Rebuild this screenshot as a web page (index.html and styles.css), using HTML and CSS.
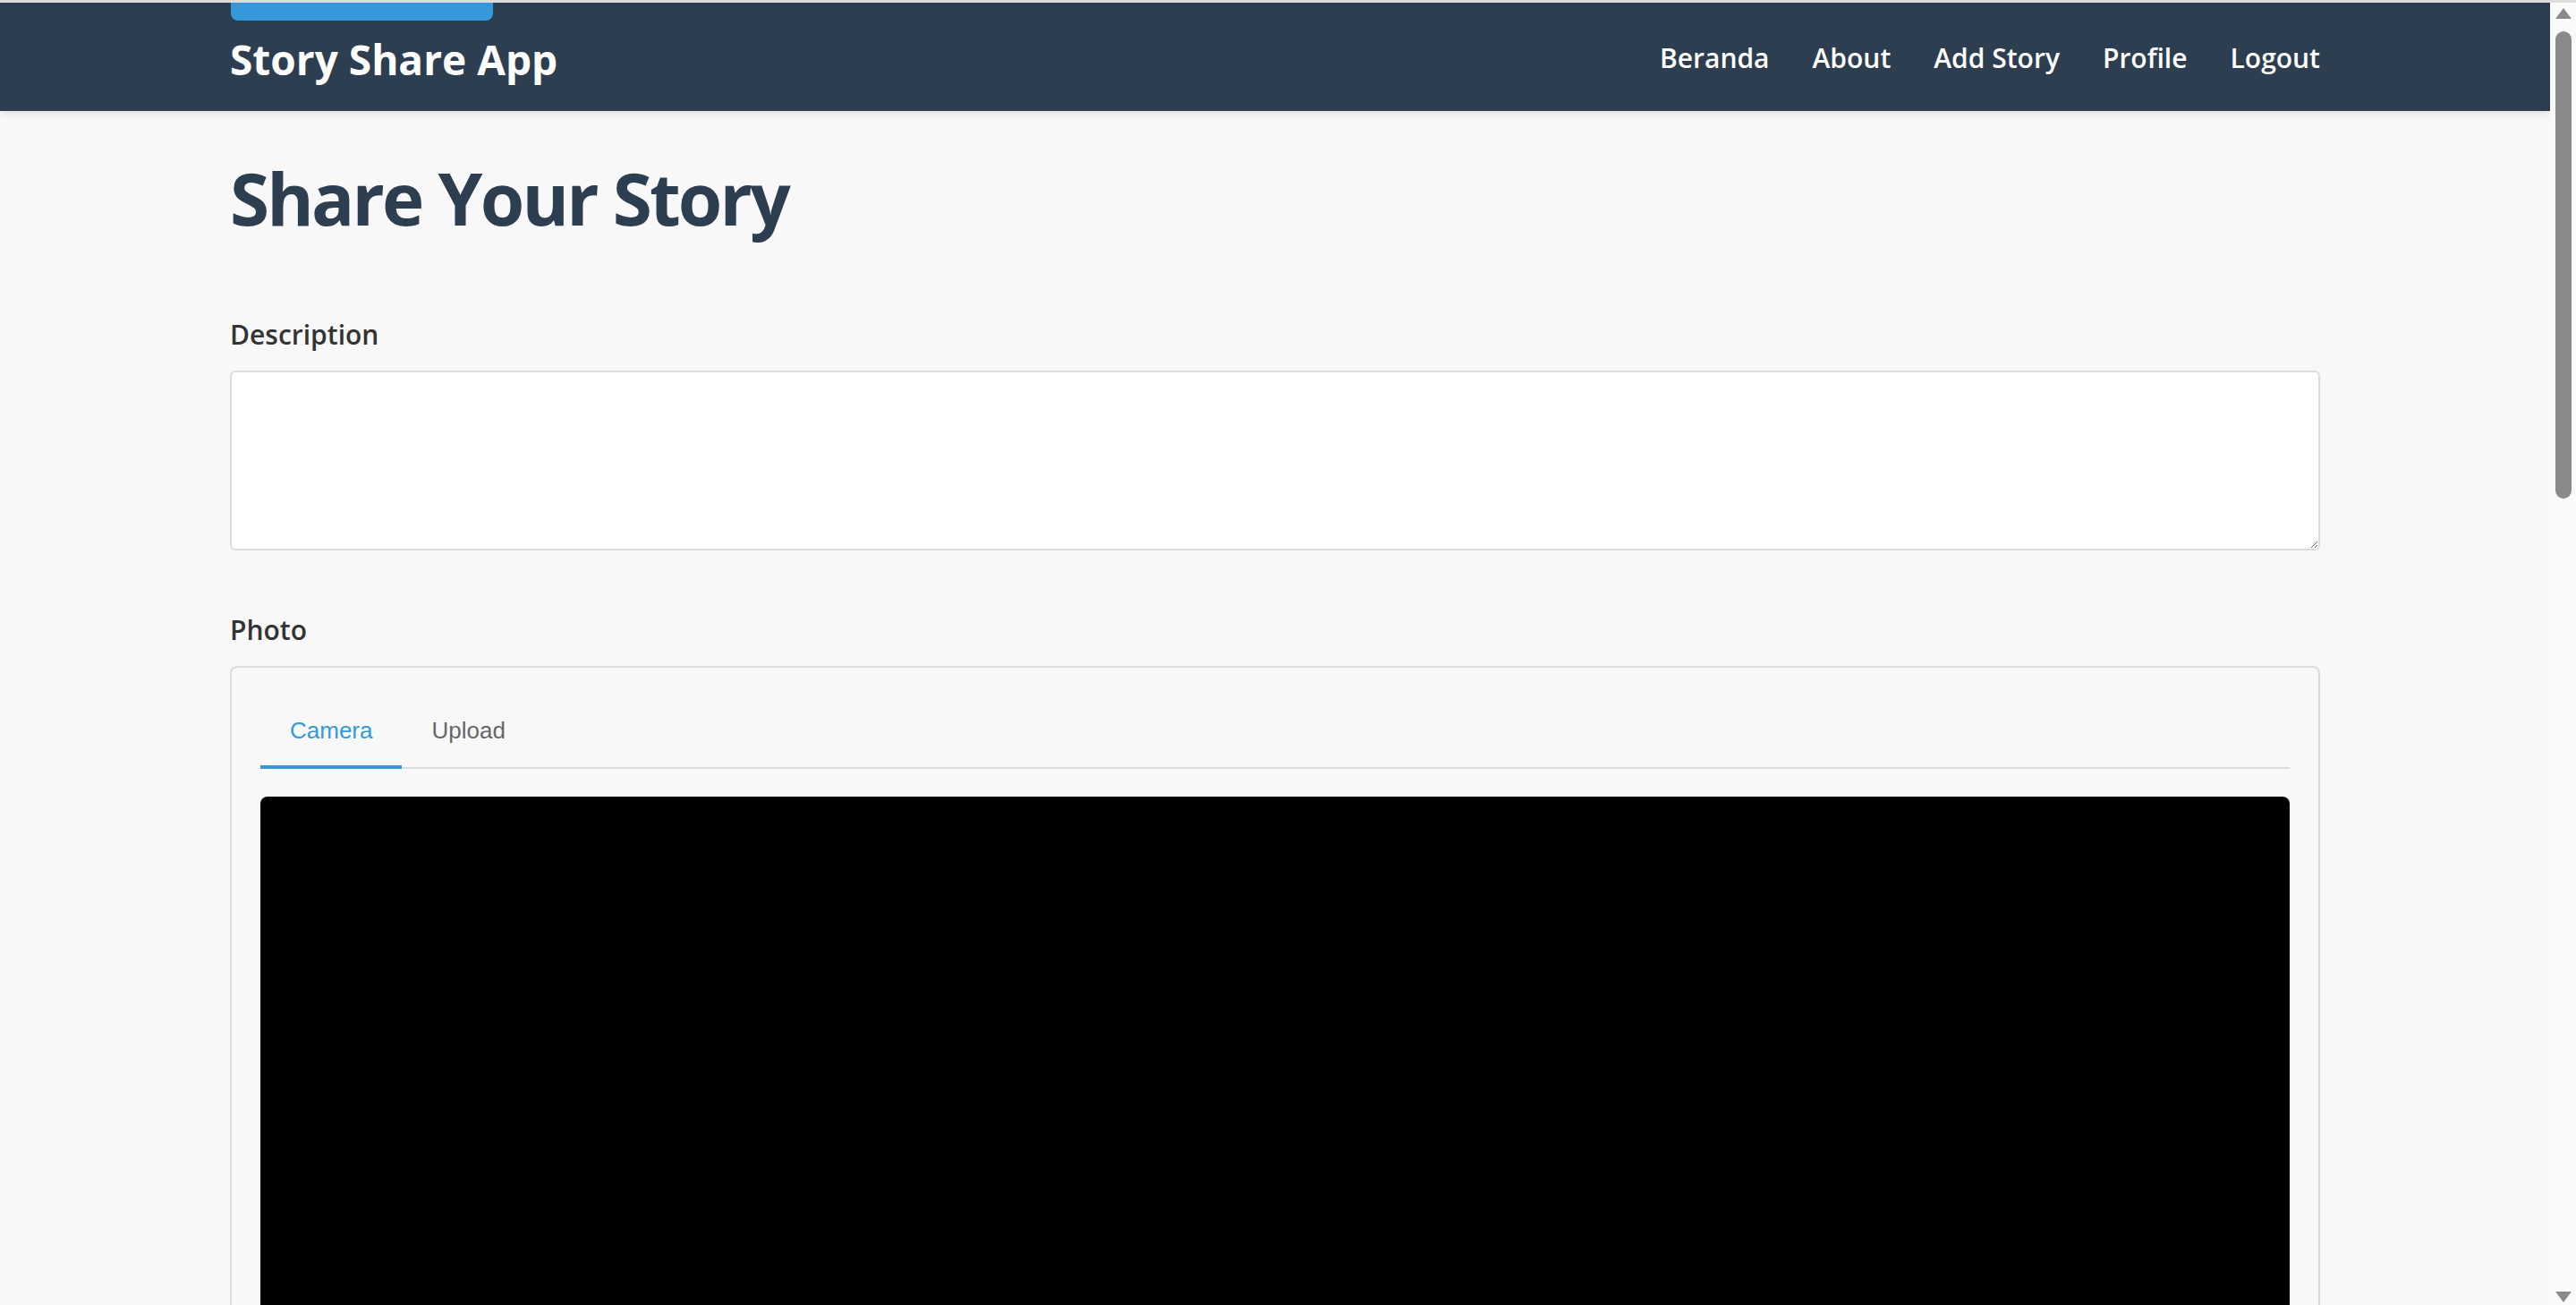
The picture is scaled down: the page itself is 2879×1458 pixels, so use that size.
FILE: index.html
```html
<!DOCTYPE html>
<html lang="en">
<head>
<meta charset="utf-8">
<title>Story Share App</title>
<link rel="stylesheet" href="styles.css">
</head>
<body>
<div class="top-strip"></div>
<div class="viewport">
  <div class="page">
    <header class="site-header">
      <div class="container header-inner">
        <a class="skip-link" href="#main"></a>
        <a class="brand" href="#">Story Share App</a>
        <nav class="nav">
          <a href="#">Beranda</a>
          <a href="#">About</a>
          <a href="#">Add Story</a>
          <a href="#">Profile</a>
          <a href="#">Logout</a>
        </nav>
      </div>
    </header>
    <main id="main" class="container main">
      <h1 class="page-title">Share Your Story</h1>
      <div class="form-group">
        <label class="label" for="desc">Description</label>
        <textarea id="desc" class="textarea"></textarea>
      </div>
      <div class="form-group photo-group">
        <label class="label">Photo</label>
        <div class="photo-box">
          <div class="tabs">
            <button class="tab active">Camera</button>
            <button class="tab">Upload</button>
          </div>
          <div class="video"></div>
        </div>
      </div>
    </main>
  </div>
  <div class="scrollbar">
    <div class="sb-arrow up"></div>
    <div class="sb-thumb"></div>
    <div class="sb-space"></div>
    <div class="sb-arrow down"></div>
  </div>
</div>
</body>
</html>
```
FILE: styles.css
```css
html, body {
  margin: 0;
  padding: 0;
  height: 100%;
  overflow: hidden;
}
body {
  display: grid;
  grid-template-rows: 3px 1fr;
  background: #f8f8f8;
  font-family: "Open Sans", "Lato", sans-serif;
  color: #333;
}
.top-strip {
  background: #dcdcdc;
}
.viewport {
  display: grid;
  grid-template-columns: 1fr 29px;
  min-height: 0;
}
.page {
  overflow: hidden;
  min-width: 0;
}
.container {
  width: 2336px;
  margin: 0 auto;
}
.site-header {
  background: #2c3e50;
  height: 121px;
  box-shadow: 0 2px 10px rgba(0, 0, 0, 0.12);
  position: relative;
  z-index: 1;
}
.header-inner {
  position: relative;
  height: 100%;
  display: flex;
  align-items: center;
  justify-content: space-between;
}
.skip-link {
  position: absolute;
  left: 1px;
  top: 0;
  width: 293px;
  height: 20px;
  background: #3498db;
  border-radius: 0 0 8px 8px;
}
.brand {
  color: #fff;
  text-decoration: none;
  font-weight: 700;
  font-size: 46px;
  margin-top: 4px;
}
.nav {
  display: flex;
  gap: 48px;
  margin-top: 2px;
}
.nav a {
  color: #fff;
  text-decoration: none;
  font-weight: 600;
  font-size: 30px;
}
.main {
  padding-top: 48px;
}
.page-title {
  margin: 0 0 88px;
  font-size: 80px;
  line-height: 1.215;
  font-weight: 700;
  letter-spacing: -2.8px;
  color: #2c3e50;
}
.form-group {
  display: flex;
  flex-direction: column;
}
.photo-group {
  margin-top: 72px;
}
.label {
  font-size: 30px;
  line-height: 34px;
  font-weight: 600;
  color: #333;
  margin-bottom: 23px;
}
.textarea {
  box-sizing: border-box;
  width: 100%;
  height: 201px;
  border: 2px solid #dcdcdc;
  border-radius: 6px;
  background: #fff;
  resize: vertical;
  margin: 0;
}
.photo-box {
  border: 2px solid #dcdcdc;
  border-radius: 8px;
  padding: 30px 32px;
}
.tabs {
  display: flex;
  border-bottom: 2px solid #dcdcdc;
}
.tab {
  font-family: "Liberation Sans", Arial, sans-serif;
  font-size: 26px;
  line-height: 31px;
  padding: 25px 33px 23px;
  border: 0;
  border-bottom: 4px solid transparent;
  margin-bottom: -2px;
  background: none;
  color: #666;
}
.tab.active {
  color: #3498db;
  border-bottom-color: #3498db;
}
.video {
  margin-top: 31px;
  height: 1000px;
  background: #000;
  border-radius: 8px;
}
.scrollbar {
  background: #fafafa;
  display: flex;
  flex-direction: column;
  align-items: center;
  padding: 6px 0 3px;
}
.sb-arrow {
  width: 0;
  height: 0;
  border-left: 9px solid transparent;
  border-right: 9px solid transparent;
}
.sb-arrow.up {
  border-bottom: 12px solid #8a8a8a;
}
.sb-arrow.down {
  border-top: 12px solid #8a8a8a;
}
.sb-thumb {
  margin-top: 14px;
  width: 18px;
  height: 522px;
  border-radius: 9px;
  background: #8a8a8a;
}
.sb-space {
  flex: 1;
}
```
